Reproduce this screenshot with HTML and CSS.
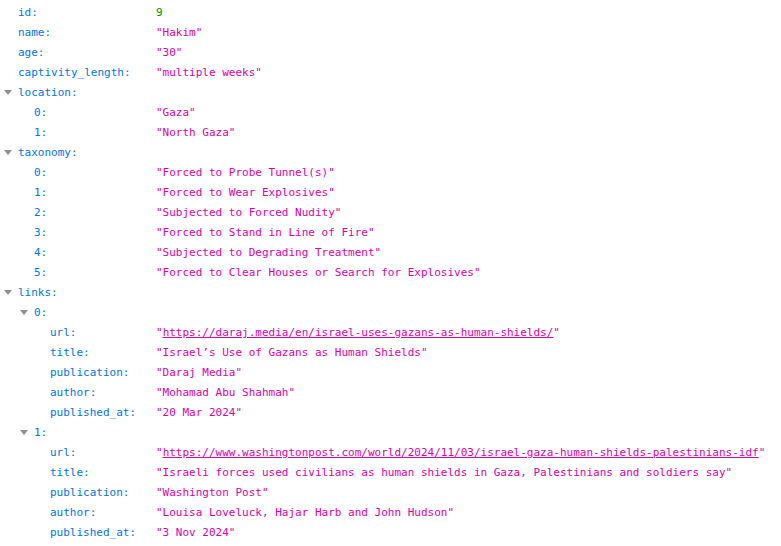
FILE: index.html
```html
<!DOCTYPE html>
<html>
<head>
<meta charset="utf-8">
<link rel="stylesheet" href="styles.css">
</head>
<body>
<div class="tree">
  <div class="row"><div class="label l0">id:</div><div class="val num">9</div></div>
  <div class="row"><div class="label l0">name:</div><div class="val str">"Hakim"</div></div>
  <div class="row"><div class="label l0">age:</div><div class="val str">"30"</div></div>
  <div class="row"><div class="label l0">captivity_length:</div><div class="val str">"multiple weeks"</div></div>
  <div class="row"><div class="label l0"><span class="twisty"></span>location:</div><div class="val"></div></div>
  <div class="row"><div class="label l1">0:</div><div class="val str">"Gaza"</div></div>
  <div class="row"><div class="label l1">1:</div><div class="val str">"North Gaza"</div></div>
  <div class="row"><div class="label l0"><span class="twisty"></span>taxonomy:</div><div class="val"></div></div>
  <div class="row"><div class="label l1">0:</div><div class="val str">"Forced to Probe Tunnel(s)"</div></div>
  <div class="row"><div class="label l1">1:</div><div class="val str">"Forced to Wear Explosives"</div></div>
  <div class="row"><div class="label l1">2:</div><div class="val str">"Subjected to Forced Nudity"</div></div>
  <div class="row"><div class="label l1">3:</div><div class="val str">"Forced to Stand in Line of Fire"</div></div>
  <div class="row"><div class="label l1">4:</div><div class="val str">"Subjected to Degrading Treatment"</div></div>
  <div class="row"><div class="label l1">5:</div><div class="val str">"Forced to Clear Houses or Search for Explosives"</div></div>
  <div class="row"><div class="label l0"><span class="twisty"></span>links:</div><div class="val"></div></div>
  <div class="row"><div class="label l1"><span class="twisty"></span>0:</div><div class="val"></div></div>
  <div class="row"><div class="label l2">url:</div><div class="val str">"<a class="link" href="#">https://daraj.media/en/israel-uses-gazans-as-human-shields/</a>"</div></div>
  <div class="row"><div class="label l2">title:</div><div class="val str">"Israel’s Use of Gazans as Human Shields"</div></div>
  <div class="row"><div class="label l2">publication:</div><div class="val str">"Daraj Media"</div></div>
  <div class="row"><div class="label l2">author:</div><div class="val str">"Mohamad Abu Shahmah"</div></div>
  <div class="row"><div class="label l2">published_at:</div><div class="val str">"20 Mar 2024"</div></div>
  <div class="row"><div class="label l1"><span class="twisty"></span>1:</div><div class="val"></div></div>
  <div class="row"><div class="label l2">url:</div><div class="val str">"<a class="link" href="#">https://www.washingtonpost.com/world/2024/11/03/israel-gaza-human-shields-palestinians-idf</a>"</div></div>
  <div class="row"><div class="label l2">title:</div><div class="val str">"Israeli forces used civilians as human shields in Gaza, Palestinians and soldiers say"</div></div>
  <div class="row"><div class="label l2">publication:</div><div class="val str">"Washington Post"</div></div>
  <div class="row"><div class="label l2">author:</div><div class="val str">"Louisa Loveluck, Hajar Harb and John Hudson"</div></div>
  <div class="row"><div class="label l2">published_at:</div><div class="val str">"3 Nov 2024"</div></div>
</div>
</body>
</html>
```

FILE: styles.css
```css
html, body {
  margin: 0;
  padding: 0;
  background: #ffffff;
}
.tree {
  padding-top: 3px;
  font-family: "DejaVu Sans Mono", monospace;
  font-size: 11px;
  line-height: 20px;
}
.row {
  display: flex;
  height: 20px;
  white-space: pre;
}
.label {
  width: 156px;
  flex: none;
  box-sizing: border-box;
  color: #0074e8;
  display: flex;
  align-items: center;
}
.l0 { padding-left: 18px; }
.l1 { padding-left: 34px; }
.l2 { padding-left: 50px; }
.twisty {
  width: 0;
  height: 0;
  border-left: 4px solid transparent;
  border-right: 4px solid transparent;
  border-top: 5px solid #8f8f8f;
  margin-left: -14px;
  margin-right: 6px;
  margin-top: -2px;
}
.val { flex: 1; }
.str { color: #dd00a9; }
.num { color: #058b00; }
.link {
  color: #dd00a9;
  text-decoration: underline;
}
```
